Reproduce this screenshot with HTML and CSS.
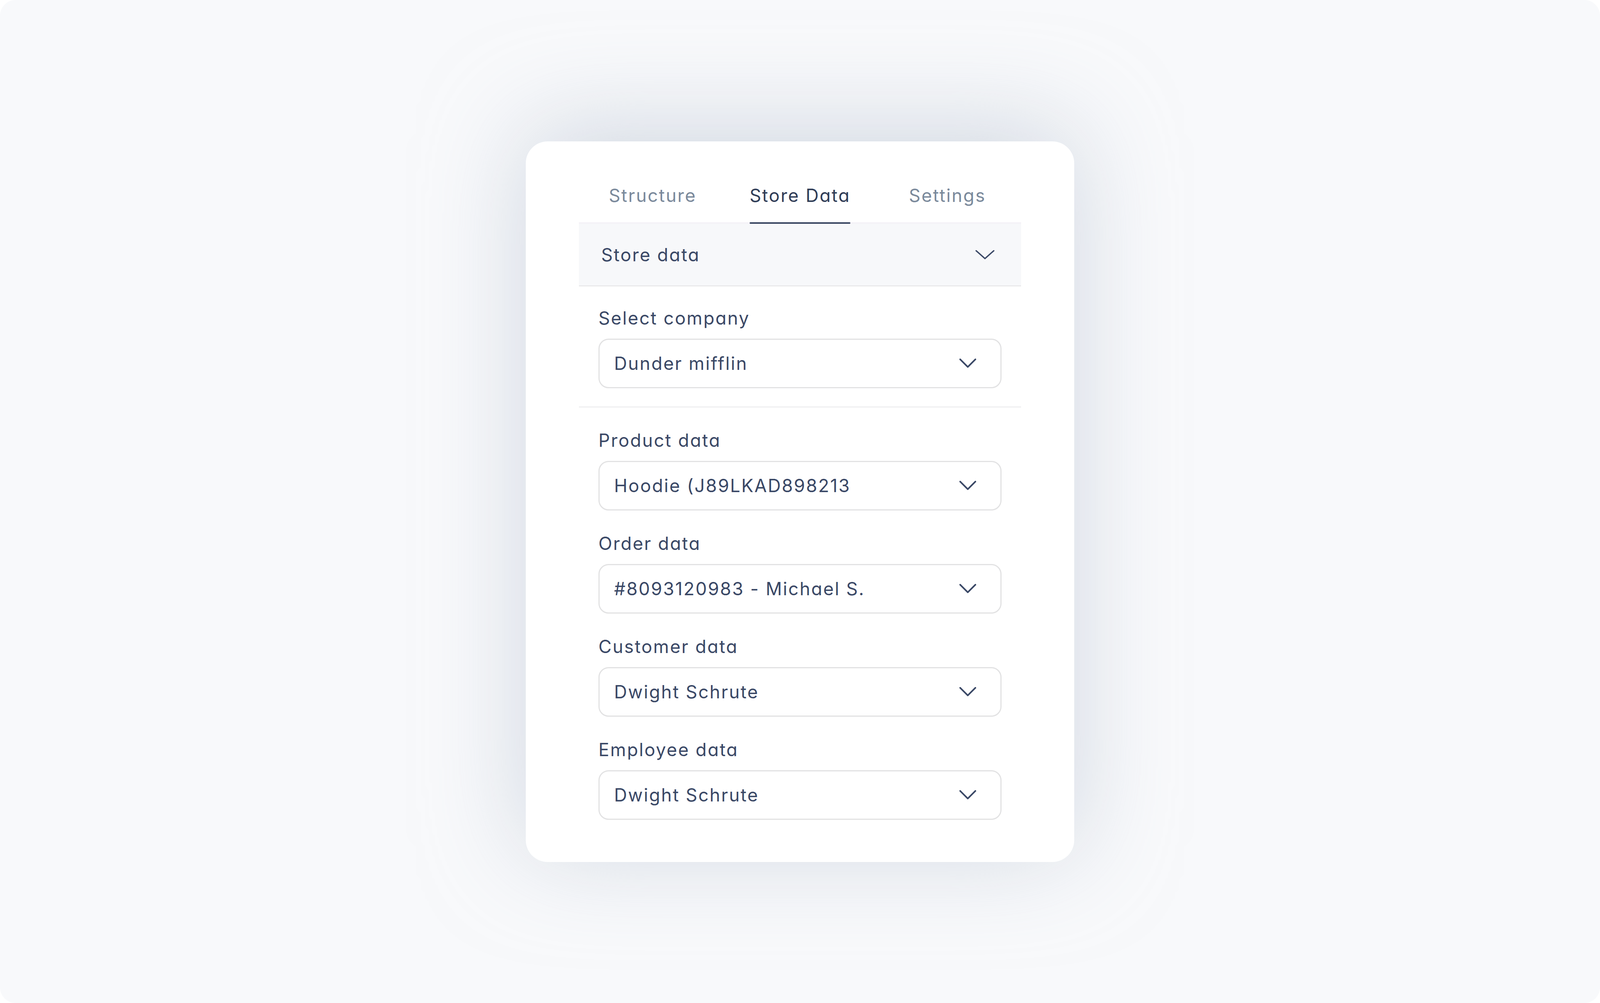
FILE: index.html
```html
<!DOCTYPE html>
<html lang="en">
<head>
<meta charset="utf-8">
<title>Store Data</title>
<link rel="stylesheet" href="styles.css">
</head>
<body>
<div class="screen">
  <div class="card">
    <nav class="tabs">
      <div class="tab"><span class="tab-inner"><span class="tab-text">Structure</span></span></div>
      <div class="tab active"><span class="tab-inner"><span class="tab-text">Store Data</span><i class="tab-bar"></i></span></div>
      <div class="tab"><span class="tab-inner"><span class="tab-text">Settings</span></span></div>
    </nav>
    <div class="band">
      <span class="band-title">Store data</span>
      <svg class="chev-lg" viewBox="0 0 49 24" width="49" height="24"><polyline points="2,2 24.5,22 47,2" fill="none" stroke="#3a4866" stroke-width="3.5" stroke-linecap="round" stroke-linejoin="round"/></svg>
    </div>
    <section class="section first">
      <div class="field">
        <div class="label">Select company</div>
        <div class="select"><span class="value">Dunder mifflin</span><svg class="chev" viewBox="0 0 43 24" width="43" height="24"><polyline points="2,2 21.5,21.5 41,2" fill="none" stroke="#3a4866" stroke-width="4" stroke-linecap="round" stroke-linejoin="round"/></svg></div>
      </div>
    </section>
    <section class="section last">
      <div class="field">
        <div class="label">Product data</div>
        <div class="select"><span class="value">Hoodie (J89LKAD898213</span><svg class="chev" viewBox="0 0 43 24" width="43" height="24"><polyline points="2,2 21.5,21.5 41,2" fill="none" stroke="#3a4866" stroke-width="4" stroke-linecap="round" stroke-linejoin="round"/></svg></div>
      </div>
      <div class="field">
        <div class="label">Order data</div>
        <div class="select"><span class="value">#8093120983 - Michael S.</span><svg class="chev" viewBox="0 0 43 24" width="43" height="24"><polyline points="2,2 21.5,21.5 41,2" fill="none" stroke="#3a4866" stroke-width="4" stroke-linecap="round" stroke-linejoin="round"/></svg></div>
      </div>
      <div class="field">
        <div class="label">Customer data</div>
        <div class="select"><span class="value">Dwight Schrute</span><svg class="chev" viewBox="0 0 43 24" width="43" height="24"><polyline points="2,2 21.5,21.5 41,2" fill="none" stroke="#3a4866" stroke-width="4" stroke-linecap="round" stroke-linejoin="round"/></svg></div>
      </div>
      <div class="field">
        <div class="label">Employee data</div>
        <div class="select"><span class="value">Dwight Schrute</span><svg class="chev" viewBox="0 0 43 24" width="43" height="24"><polyline points="2,2 21.5,21.5 41,2" fill="none" stroke="#3a4866" stroke-width="4" stroke-linecap="round" stroke-linejoin="round"/></svg></div>
      </div>
    </section>
  </div>
</div>
</body>
</html>
```
FILE: styles.css
```css
* { box-sizing: border-box; }
html, body {
  margin: 0;
  padding: 0;
  background: #ffffff;
}
body {
  font-family: Inter, "Open Sans", "Liberation Sans", sans-serif;
  font-feature-settings: "cv11" 1;
  color: #3a4866;
}
.screen {
  width: 100vw;
  height: 100vh;
  background: #f8f9fb;
  border-radius: 40px;
  display: flex;
  align-items: center;
  justify-content: center;
  overflow: hidden;
}
.card {
  width: 1404px;
  background: #ffffff;
  border-radius: 56px;
  padding: 110px 136px 0;
  box-shadow: 0 -30px 420px rgba(184, 193, 208, 0.6);
}
.tabs {
  display: flex;
  border-bottom: 4px solid #f4f2f7;
}
.tab {
  flex: 1;
  display: flex;
  justify-content: center;
  margin-bottom: -4px;
}
.tab-inner {
  display: inline-flex;
  flex-direction: column;
  align-items: stretch;
}
.tab-text {
  font-size: 46px;
  line-height: 56px;
  letter-spacing: 2.6px;
  color: #7a899b;
  padding-bottom: 41px;
  text-align: center;
}
.tab:not(.active) .tab-text { padding-bottom: 45px; }
.tab.active .tab-text { color: #2f3c56; }
.tab-bar {
  display: block;
  height: 4px;
  border-radius: 2px;
  background: #3a4762;
}
.band {
  height: 160px;
  background: #f7f8fa;
  border-bottom: 2px solid #e3e3e4;
  display: flex;
  align-items: center;
  justify-content: space-between;
  padding: 0 68px 0 57px;
}
.band-title {
  font-size: 46px;
  line-height: 56px;
  letter-spacing: 2.6px;
  color: #3a4866;
}
.chev-lg, .chev { display: block; flex: none; }
.section {
  display: flex;
  flex-direction: column;
  gap: 56px;
}
.section.first {
  padding: 53px 50px 47px;
  border-bottom: 2px solid #e8e9eb;
}
.section.last {
  padding: 56px 50px 108px;
}
.label {
  font-size: 46px;
  line-height: 56px;
  letter-spacing: 2.6px;
  color: #3a4866;
  margin-bottom: 25px;
}
.select {
  height: 127px;
  border: 3px solid #e2e2e3;
  border-radius: 26px;
  background: #ffffff;
  display: flex;
  align-items: center;
  justify-content: space-between;
  padding: 0 62px 0 37px;
}
.value {
  font-size: 46px;
  line-height: 56px;
  letter-spacing: 2.6px;
  color: #3a4866;
  white-space: nowrap;
}
```
